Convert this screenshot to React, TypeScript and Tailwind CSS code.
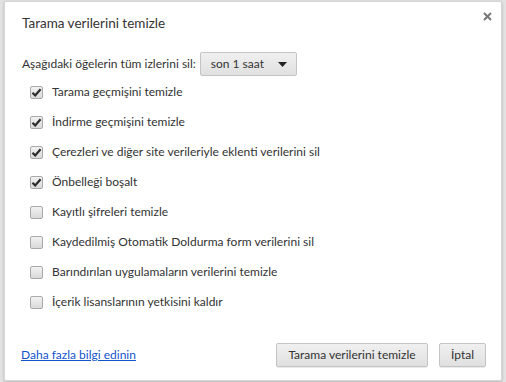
const checks: { label: string; checked: boolean }[] = [
  { label: "Tarama geçmişini temizle", checked: true },
  { label: "İndirme geçmişini temizle", checked: true },
  { label: "Çerezleri ve diğer site verileriyle eklenti verilerini sil", checked: true },
  { label: "Önbelleği boşalt", checked: true },
  { label: "Kayıtlı şifreleri temizle", checked: false },
  { label: "Kaydedilmiş Otomatik Doldurma form verilerini sil", checked: false },
  { label: "Barındırılan uygulamaların verilerini temizle", checked: false },
  { label: "İçerik lisanslarının yetkisini kaldır", checked: false },
];

function Checkbox({ checked }: { checked: boolean }) {
  return (
    <span className="flex h-[13px] w-[13px] shrink-0 items-center justify-center rounded-[2px] border border-[#a9a9a9] bg-gradient-to-b from-[#f2f2f2] to-[#d9d9d9]">
      {checked && (
        <svg width="11" height="11" viewBox="0 0 11 11">
          <path d="M1.5 5.8 L4.2 8.5 L9.6 2.2" fill="none" stroke="#2a2a2a" strokeWidth="2.2" />
        </svg>
      )}
    </span>
  );
}

export default function App() {
  return (
    <div className="h-[382px] w-[506px] bg-[#e2e2e2] pl-[4px] pt-[1px] font-['Lato',sans-serif] text-[12px] text-[#333]">
      <div className="relative flex h-[380px] w-[498px] flex-col rounded-[2px] border border-[#d6d6d6] bg-white shadow-[0_1px_3px_rgba(0,0,0,0.2)]">
        <button className="absolute right-[9px] top-[10px]">
          <svg width="9" height="9" viewBox="0 0 9 9">
            <path d="M1 1 L8 8 M8 1 L1 8" stroke="#777" strokeWidth="2" />
          </svg>
        </button>
        <h1 className="ml-[17px] mt-[11px] text-[13.5px] leading-[20px] text-[#333]">
          Tarama verilerini temizle
        </h1>
        <div className="ml-[17px] mt-[19px] flex items-center gap-[4px]">
          <span>Aşağıdaki öğelerin tüm izlerini sil:</span>
          <div className="flex h-[24px] w-[97px] items-center justify-between rounded-[2px] border border-[#c4c4c4] bg-gradient-to-b from-[#f0f0f0] to-[#e0e0e0] pl-[10px] pr-[9px]">
            <span>son 1 saat</span>
            <svg width="9" height="5" viewBox="0 0 9 5">
              <path d="M0 0 H9 L4.5 5 Z" fill="#222" />
            </svg>
          </div>
        </div>
        <div className="ml-[25px] mt-[1px] flex flex-col">
          {checks.map((c) => (
            <label key={c.label} className="flex h-[30px] items-center gap-[9px]">
              <Checkbox checked={c.checked} />
              <span>{c.label}</span>
            </label>
          ))}
        </div>
        <div className="mt-auto mb-[13px] ml-[16px] mr-[15px] flex items-center">
          <a href="#" className="text-[#1155cc] underline">
            Daha fazla bilgi edinin
          </a>
          <div className="ml-auto flex gap-[11px]">
            <button className="h-[24px] w-[152px] rounded-[2px] border border-[#c4c4c4] bg-gradient-to-b from-[#f0f0f0] to-[#e0e0e0] text-[#333] shadow-[0_1px_0_rgba(0,0,0,0.08)]">
              Tarama verilerini temizle
            </button>
            <button className="h-[24px] w-[47px] rounded-[2px] border border-[#c4c4c4] bg-gradient-to-b from-[#f0f0f0] to-[#e0e0e0] text-[#333] shadow-[0_1px_0_rgba(0,0,0,0.08)]">
              İptal
            </button>
          </div>
        </div>
      </div>
    </div>
  );
}
